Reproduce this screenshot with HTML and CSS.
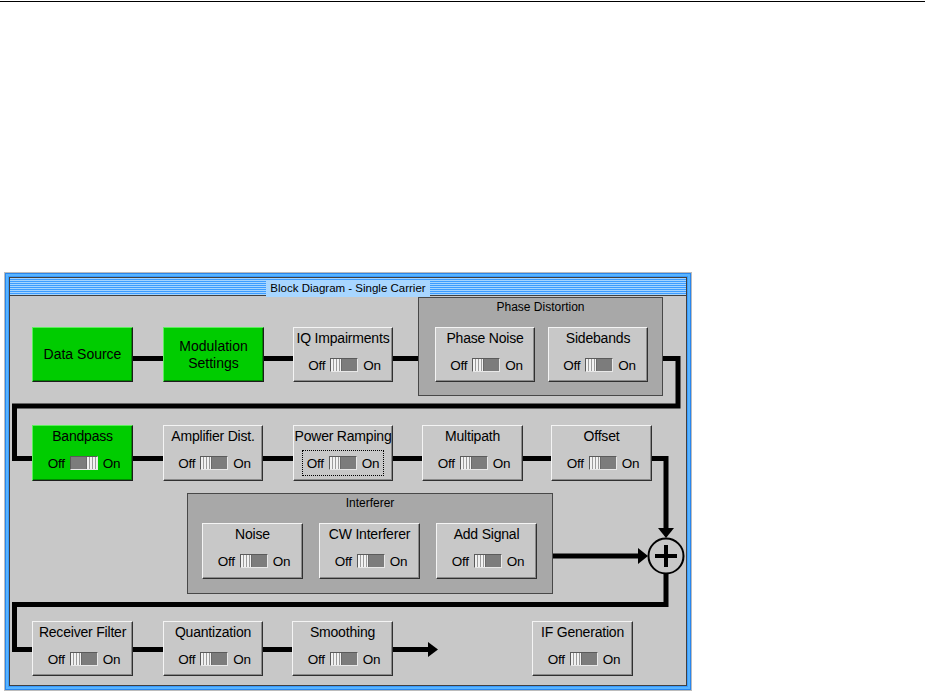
FILE: index.html
```html
<!DOCTYPE html>
<html>
<head>
  <meta charset="utf-8">
  <title>Block Diagram - Single Carrier</title>
  <link rel="stylesheet" href="styles.css">
</head>
<body>
  <div class="rule"></div>
  <div class="window">
    <div class="pane">
      <div class="titlebar"><span class="title">Block Diagram - Single Carrier</span></div>
      <div class="diagram">
        <!-- wires go under the blocks -->
        <svg class="wires" width="676" height="389" viewBox="0 0 676 389">
          <path fill="none" stroke="#000" stroke-width="5" stroke-linejoin="miter"
                d="M123 62.5H153 M254 62.5H283 M383 62.5H408
                   M637 62.5H668V110H4.5V162.5H22
                   M123 162.5H153 M253 162.5H283 M383 162.5H412 M513 162.5H541
                   M642 162.5H656V234
                   M543 260H630
                   M656 277V308.5H4.5V353.5H22
                   M123 353.5H153 M253 353.5H282 M383 353.5H420"/>
          <polygon points="648,232 664,232 656,242" fill="#000"/>
          <polygon points="628,252 628,268 638,260" fill="#000"/>
          <polygon points="418,346 418,361 428,353.5" fill="#000"/>
          <circle cx="656" cy="260" r="17.5" fill="none" stroke="#000" stroke-width="2"/>
          <path d="M645 260H667 M656 249V271" stroke="#000" stroke-width="4"/>
        </svg>

        <div class="block go plain node n-source">Data Source</div>
        <div class="block go plain node n-mod">Modulation<br>Settings</div>
        <div class="block node n-iq">
          <div class="label">IQ Impairments</div>
          <div class="switch"><span>Off</span><i class="toggle"></i><span>On</span></div>
        </div>
        <div class="group node n-phase">
          <div class="group-title">Phase Distortion</div>
          <div class="group-row">
            <div class="block">
              <div class="label">Phase Noise</div>
              <div class="switch"><span>Off</span><i class="toggle"></i><span>On</span></div>
            </div>
            <div class="block">
              <div class="label">Sidebands</div>
              <div class="switch"><span>Off</span><i class="toggle"></i><span>On</span></div>
            </div>
          </div>
        </div>

        <div class="block go node n-bandpass">
          <div class="label">Bandpass</div>
          <div class="switch"><span>Off</span><i class="toggle on"></i><span>On</span></div>
        </div>
        <div class="block node n-amp">
          <div class="label">Amplifier Dist.</div>
          <div class="switch"><span>Off</span><i class="toggle"></i><span>On</span></div>
        </div>
        <div class="block node n-ramp">
          <div class="label">Power Ramping</div>
          <div class="switch focus"><span>Off</span><i class="toggle"></i><span>On</span></div>
        </div>
        <div class="block node n-multi">
          <div class="label">Multipath</div>
          <div class="switch"><span>Off</span><i class="toggle"></i><span>On</span></div>
        </div>
        <div class="block node n-offset">
          <div class="label">Offset</div>
          <div class="switch"><span>Off</span><i class="toggle"></i><span>On</span></div>
        </div>

        <div class="group node n-interf">
          <div class="group-title">Interferer</div>
          <div class="group-row">
            <div class="block">
              <div class="label">Noise</div>
              <div class="switch"><span>Off</span><i class="toggle"></i><span>On</span></div>
            </div>
            <div class="block">
              <div class="label">CW Interferer</div>
              <div class="switch"><span>Off</span><i class="toggle"></i><span>On</span></div>
            </div>
            <div class="block">
              <div class="label">Add Signal</div>
              <div class="switch"><span>Off</span><i class="toggle"></i><span>On</span></div>
            </div>
          </div>
        </div>

        <div class="block node n-recv">
          <div class="label">Receiver Filter</div>
          <div class="switch"><span>Off</span><i class="toggle"></i><span>On</span></div>
        </div>
        <div class="block node n-quant">
          <div class="label">Quantization</div>
          <div class="switch"><span>Off</span><i class="toggle"></i><span>On</span></div>
        </div>
        <div class="block node n-smooth">
          <div class="label">Smoothing</div>
          <div class="switch"><span>Off</span><i class="toggle"></i><span>On</span></div>
        </div>
        <div class="block node n-ifgen">
          <div class="label">IF Generation</div>
          <div class="switch"><span>Off</span><i class="toggle"></i><span>On</span></div>
        </div>
      </div>
    </div>
  </div>
</body>
</html>
```

FILE: styles.css
```css
body {
  margin: 0;
  background: #fff;
  font-family: "Liberation Sans", Arial, sans-serif;
  color: #000;
}
.rule {
  height: 1px;
  margin-top: 1px;
  background: #000;
}
.window {
  box-sizing: border-box;
  width: 688px;
  margin: 270px 0 0 4px;
  padding: 4px;
  border: 1px solid #bcbcbc;
  background: #3a9cff;
  box-shadow: inset 0 0 0 1px #2a86ec, inset 0 0 0 3px #58b4ff;
}
.pane {
  border: 1px solid #404040;
  background: #c8c8c8;
}
.titlebar {
  height: 17px;
  border-bottom: 1px solid #404040;
  text-align: center;
  background: repeating-linear-gradient(180deg, #a4d4ff 0 1px, #3c9cff 1px 2px);
}
.title {
  display: inline-block;
  height: 17px;
  line-height: 17px;
  padding: 0 4px;
  font-size: 11.5px;
  background: #a8d6ff;
}
.diagram {
  position: relative;
  height: 389px;
}
.wires {
  position: absolute;
  left: 0;
  top: 0;
}

/* blocks */
.block {
  box-sizing: border-box;
  width: 101px;
  height: 56px;
  text-align: center;
  font-size: 14px;
  background: #c8c8c8;
  border: 1px solid;
  border-color: #f4f4f4 #303030 #303030 #f4f4f4;
  box-shadow: inset -1px -1px 0 #8a8a8a;
}
.block.go {
  background: #00cc00;
  border-color: #5cf05c #1c1c1c #1c1c1c #5cf05c;
  box-shadow: inset -1px -1px 0 #008a00;
}
.block.plain {
  display: flex;
  align-items: center;
  justify-content: center;
  line-height: 17px;
}
.label {
  padding-top: 2px;
  line-height: 17px;
  white-space: nowrap;
  letter-spacing: -0.2px;
}
.switch {
  display: flex;
  align-items: center;
  justify-content: center;
  gap: 5px;
  height: 16px;
  margin: 10px auto 0;
  padding-left: 3px;
  font-size: 13.5px;
  letter-spacing: -0.3px;
}
.switch.focus {
  width: max-content;
  padding-left: 0;
  outline: 1px dotted #000;
  outline-offset: 4px;
}
.toggle {
  position: relative;
  box-sizing: border-box;
  width: 28px;
  height: 14px;
  background: #7c7c7c;
  border: 1px solid;
  border-color: #5a5a5a #e8e8e8 #e8e8e8 #5a5a5a;
}
.toggle::before {
  content: "";
  position: absolute;
  left: 0;
  top: 0;
  width: 10px;
  height: 12px;
  background: repeating-linear-gradient(90deg, #f2f2f2 0 2px, #9c9c9c 2px 3px);
  border-right: 1px solid #6a6a6a;
}
.toggle.on::before {
  left: auto;
  right: 0;
  border-right: 0;
  border-left: 1px solid #6a6a6a;
}

/* groups */
.group {
  box-sizing: border-box;
  text-align: center;
  font-size: 12px;
  background: #a8a8a8;
  border: 1px solid #484848;
}
.group-title {
  padding-top: 2px;
  line-height: 14px;
}
.group-row {
  display: flex;
  margin-top: 13px;
}
.n-phase .group-row {
  gap: 13px;
  padding-left: 16px;
}
.n-phase .block {
  width: 100px;
  height: 55px;
}
.n-interf .group-row {
  gap: 16px;
  padding-left: 14px;
}

/* node placement on the diagram */
.node {
  position: absolute;
}
.n-source { left: 22px; top: 31px; height: 55px; }
.n-mod { left: 153px; top: 31px; height: 55px; }
.n-iq { left: 283px; top: 31px; width: 100px; height: 55px; }
.n-phase { left: 408px; top: 1px; width: 245px; height: 99px; }
.n-bandpass { left: 22px; top: 129px; }
.n-amp { left: 153px; top: 129px; width: 100px; }
.n-ramp { left: 283px; top: 129px; width: 100px; }
.n-multi { left: 412px; top: 129px; }
.n-offset { left: 541px; top: 129px; }
.n-interf { left: 177px; top: 197px; width: 366px; height: 101px; }
.n-recv { left: 22px; top: 325px; height: 55px; }
.n-quant { left: 153px; top: 325px; width: 100px; height: 55px; }
.n-smooth { left: 282px; top: 325px; height: 55px; }
.n-ifgen { left: 522px; top: 325px; height: 55px; }
```
